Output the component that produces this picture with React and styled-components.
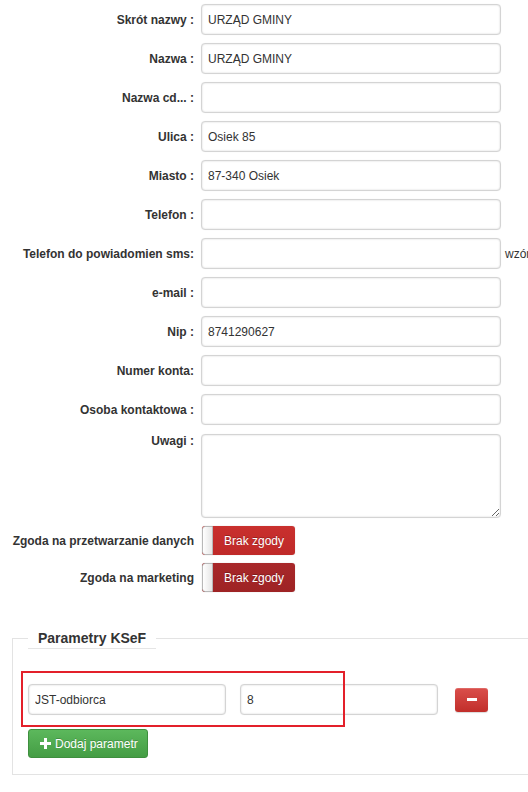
import React from 'react';
import styled, { createGlobalStyle } from 'styled-components';

const GlobalStyle = createGlobalStyle`
  html, body {
    margin: 0;
    padding: 0;
    background: #fff;
    overflow: hidden;
  }
  body {
    font-family: "Liberation Sans", Arial, sans-serif;
    font-size: 12px;
    color: #333;
  }
`;

const Page = styled.div`
  width: 560px;
  padding-top: 4px;
`;

const Form = styled.div`
  display: grid;
  grid-template-columns: 186px 300px auto;
  column-gap: 7px;
  row-gap: 8px;
  padding-left: 8px;
  align-items: center;
`;

const Label = styled.label`
  text-align: right;
  font-weight: bold;
  font-size: 12px;
  line-height: 18px;
  color: #333;
  white-space: nowrap;
  align-self: ${(p) => (p.$top ? 'start' : 'center')};
  margin-top: ${(p) => (p.$top ? '-1px' : '0')};
`;

const Input = styled.input`
  box-sizing: border-box;
  width: ${(p) => p.$w || '300px'};
  height: ${(p) => p.$h || '31px'};
  padding: 0 6px;
  border: 1px solid #d4d4d4;
  border-radius: 4px;
  box-shadow: inset 0 0 2px rgba(0, 0, 0, 0.18), 0 0 1px rgba(0, 0, 0, 0.08);
  font-family: "Liberation Sans", Arial, sans-serif;
  font-size: 12px;
  color: #333;
  background: #fff;
  outline: none;
`;

const TextArea = styled.textarea`
  box-sizing: border-box;
  width: 300px;
  height: 84px;
  padding: 4px 6px;
  border: 1px solid #d4d4d4;
  border-radius: 4px;
  box-shadow: inset 0 0 2px rgba(0, 0, 0, 0.18), 0 0 1px rgba(0, 0, 0, 0.08);
  font-family: "Liberation Sans", Arial, sans-serif;
  font-size: 12px;
  resize: both;
  margin-top: 1px;
`;

const Hint = styled.span`
  font-size: 12px;
  color: #333;
  margin-left: -3px;
  white-space: nowrap;
`;

const Toggle = styled.div`
  display: flex;
  width: 93px;
  height: 29px;
  border-radius: 3px;
  overflow: hidden;
  margin-left: 1px;
  background: ${(p) =>
    p.$dark
      ? 'linear-gradient(#a8282a, #9e2324)'
      : 'linear-gradient(#c9302e, #bf2a29)'};
  box-shadow: 0 0 1px rgba(0, 0, 0, 0.3);
`;

const Knob = styled.span`
  width: 11px;
  height: 100%;
  box-sizing: border-box;
  background: linear-gradient(90deg, #fff, #e6e6e6);
  border: 1px solid #b8b8b8;
  border-radius: 3px 0 0 3px;
`;

const ToggleText = styled.span`
  flex: 1;
  display: flex;
  align-items: center;
  justify-content: center;
  color: #fff;
  font-size: 12px;
  text-shadow: 0 -1px 0 rgba(0, 0, 0, 0.25);
`;

const Fieldset = styled.fieldset`
  margin: 36px 0 0 12px;
  padding: 0 15px 16px 15px;
  border: 1px solid #e3e3e3;
  border-right: none;
  position: relative;
`;

const Legend = styled.legend`
  margin-left: 0;
  padding: 0 10px;
  font-size: 14px;
  font-weight: bold;
  line-height: 20px;
  color: #333;
  border-bottom: 1px solid #e5e5e5;
`;

const ParamRow = styled.div`
  display: flex;
  align-items: center;
  margin-top: 35px;
`;

const Highlight = styled.div`
  position: absolute;
  left: 8px;
  top: 22px;
  width: 324px;
  height: 56px;
  border: 2px solid #e3202a;
  box-sizing: border-box;
  pointer-events: none;
`;

const MinusButton = styled.button`
  width: 33px;
  height: 24px;
  margin-left: 17px;
  border: none;
  border-radius: 3px;
  background: linear-gradient(#da4f4b, #c12e2a);
  box-shadow: inset 0 1px 0 rgba(255, 255, 255, 0.15), 0 1px 1px rgba(0, 0, 0, 0.15);
  display: flex;
  align-items: center;
  justify-content: center;
  padding: 0;
  &::after {
    content: '';
    width: 10px;
    height: 3px;
    background: #fff;
  }
`;

const AddButton = styled.button`
  margin-top: 14px;
  display: flex;
  align-items: center;
  gap: 4px;
  height: 29px;
  width: 120px;
  padding: 0 0 0 11px;
  border: 1px solid #3e8f3e;
  border-radius: 3px;
  background: linear-gradient(#5cb85c, #449d44);
  color: #fff;
  font-family: "Liberation Sans", Arial, sans-serif;
  font-size: 12px;
  text-shadow: 0 -1px 0 rgba(0, 0, 0, 0.2);
`;

const fields = [
  ['Skrót nazwy :', 'URZĄD GMINY'],
  ['Nazwa :', 'URZĄD GMINY'],
  ['Nazwa cd... :', ''],
  ['Ulica :', 'Osiek 85'],
  ['Miasto :', '87-340 Osiek'],
  ['Telefon :', ''],
  ['Telefon do powiadomien sms:', '', 'wzór'],
  ['e-mail :', ''],
  ['Nip :', '8741290627'],
  ['Numer konta:', ''],
  ['Osoba kontaktowa :', ''],
];

const App = () => (
  <Page>
    <GlobalStyle />
    <Form>
      {fields.map(([label, value, hint]) => (
        <React.Fragment key={label}>
          <Label>{label}</Label>
          <Input defaultValue={value} />
          {hint ? <Hint>{hint}</Hint> : <span />}
        </React.Fragment>
      ))}
      <Label $top>Uwagi :</Label>
      <TextArea />
      <span />
      <Label>Zgoda na przetwarzanie danych</Label>
      <Toggle>
        <Knob />
        <ToggleText>Brak zgody</ToggleText>
      </Toggle>
      <span />
      <Label>Zgoda na marketing</Label>
      <Toggle $dark>
        <Knob />
        <ToggleText>Brak zgody</ToggleText>
      </Toggle>
      <span />
    </Form>
    <Fieldset>
      <Legend>Parametry KSeF</Legend>
      <Highlight />
      <ParamRow>
        <Input $w="198px" $h="31px" defaultValue="JST-odbiorca" />
        <Input $w="198px" $h="31px" defaultValue="8" style={{ marginLeft: 14 }} />
        <MinusButton aria-label="Usuń" />
      </ParamRow>
      <AddButton>
        <svg width="11" height="11" viewBox="0 0 11 11">
          <path d="M4 0h3v4h4v3H7v4H4V7H0V4h4z" fill="#fff" />
        </svg>
        Dodaj parametr
      </AddButton>
    </Fieldset>
  </Page>
);

export default App;
